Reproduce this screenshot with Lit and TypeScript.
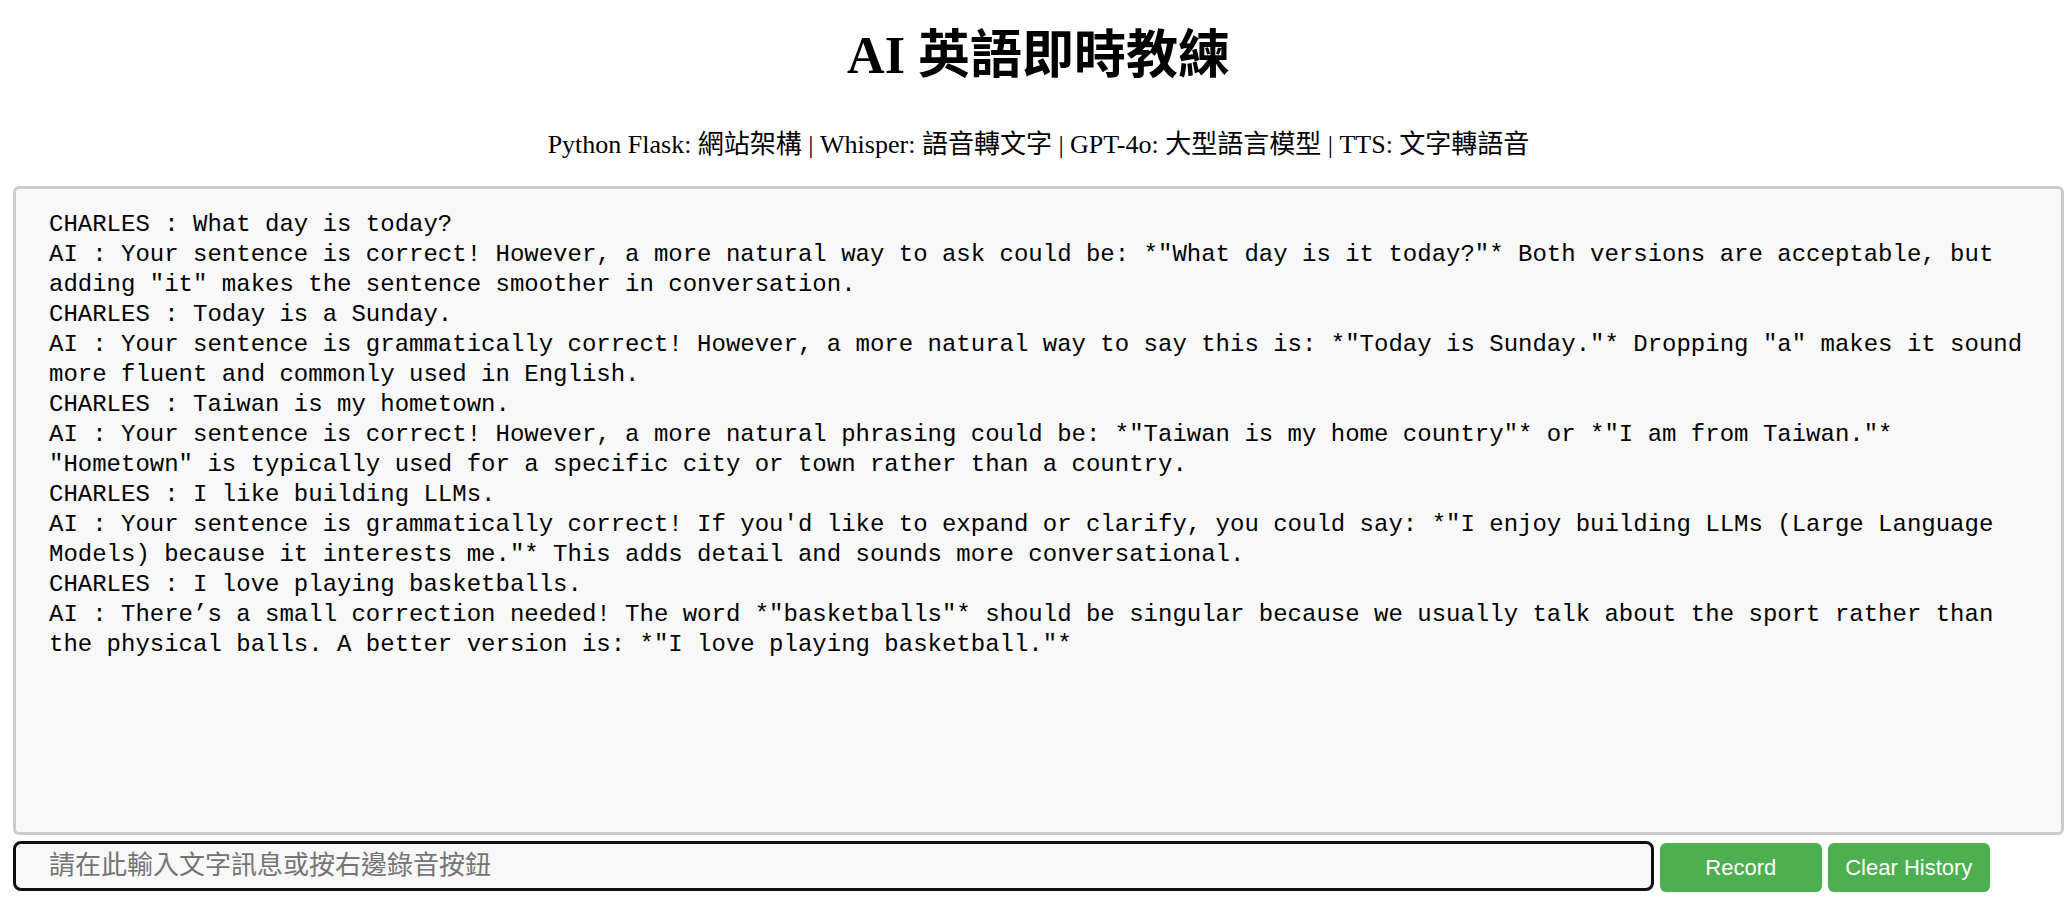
import { LitElement, html, css } from "lit";
import { customElement, state } from "lit/decorators.js";

interface Message {
  who: string;
  text: string;
}

const HISTORY: Message[] = [
  { who: "CHARLES", text: "What day is today?" },
  {
    who: "AI",
    text: 'Your sentence is correct! However, a more natural way to ask could be: *"What day is it today?"* Both versions are acceptable, but adding "it" makes the sentence smoother in conversation.',
  },
  { who: "CHARLES", text: "Today is a Sunday." },
  {
    who: "AI",
    text: 'Your sentence is grammatically correct! However, a more natural way to say this is: *"Today is Sunday."* Dropping "a" makes it sound more fluent and commonly used in English.',
  },
  { who: "CHARLES", text: "Taiwan is my hometown." },
  {
    who: "AI",
    text: 'Your sentence is correct! However, a more natural phrasing could be: *"Taiwan is my home country"* or *"I am from Taiwan."* "Hometown" is typically used for a specific city or town rather than a country.',
  },
  { who: "CHARLES", text: "I like building LLMs." },
  {
    who: "AI",
    text: 'Your sentence is grammatically correct! If you\'d like to expand or clarify, you could say: *"I enjoy building LLMs (Large Language Models) because it interests me."* This adds detail and sounds more conversational.',
  },
  { who: "CHARLES", text: "I love playing basketballs." },
  {
    who: "AI",
    text: 'There’s a small correction needed! The word *"basketballs"* should be singular because we usually talk about the sport rather than the physical balls. A better version is: *"I love playing basketball."*',
  },
];

@customElement("app-root")
export class AppRoot extends LitElement {
  @state() private messages: Message[] = HISTORY;

  static styles = css`
    :host {
      display: block;
      padding: 18px 8px 0 13px;
      background: #fff;
      color: #000;
      font-family: "Liberation Serif", "Noto Sans CJK TC", serif;
    }
    .title {
      margin: 0;
      font-size: 52px;
      line-height: 76px;
      font-weight: 700;
      text-align: center;
    }
    .stack {
      margin: 32px 0 22px;
      font-size: 26px;
      line-height: 38px;
      text-align: center;
    }
    .log,
    .message {
      box-sizing: border-box;
      background: #f8f8f8;
      color: #000;
      margin: 0;
      font-family: "Liberation Mono", "Noto Sans CJK TC", monospace;
      outline: none;
    }
    .log {
      display: block;
      width: 100%;
      padding: 21px 33px 22px;
      border: 3px solid #ccc;
      border-radius: 6px;
      font-size: 24px;
      line-height: 30px;
      resize: none;
      overflow: auto;
    }
    .controls {
      display: flex;
      align-items: flex-start;
      gap: 6px;
      margin-top: 6px;
    }
    .message {
      width: 80%;
      height: 50px;
      padding: 2px 33px 0;
      border: 3px solid #101010;
      border-radius: 8px;
      font-size: 26px;
    }
    .message::placeholder {
      color: #757575;
    }
    .action {
      width: 162px;
      height: 49px;
      margin: 2px 0 0;
      padding: 0;
      border: 0;
      border-radius: 6px;
      background: #4caf50;
      color: #fff;
      font-family: "Liberation Sans", Arial, sans-serif;
      font-size: 22px;
      white-space: nowrap;
      cursor: pointer;
    }
  `;

  private clear() {
    this.messages = [];
  }

  render() {
    const log = this.messages.map((m) => `${m.who} : ${m.text}`).join("\n");
    return html`
      <h1 class="title">AI 英語即時教練</h1>
      <p class="stack">
        Python Flask: 網站架構 | Whisper: 語音轉文字 | GPT-4o: 大型語言模型 | TTS: 文字轉語音
      </p>
      <textarea
        class="log"
        rows="20"
        readonly
        spellcheck="false"
        aria-label="對話紀錄"
        .value=${log}
      ></textarea>
      <div class="controls">
        <input
          class="message"
          type="text"
          aria-label="文字訊息"
          placeholder="請在此輸入文字訊息或按右邊錄音按鈕"
        />
        <button class="action" type="button">Record</button>
        <button class="action" type="button" @click=${this.clear}>Clear History</button>
      </div>
    `;
  }
}
